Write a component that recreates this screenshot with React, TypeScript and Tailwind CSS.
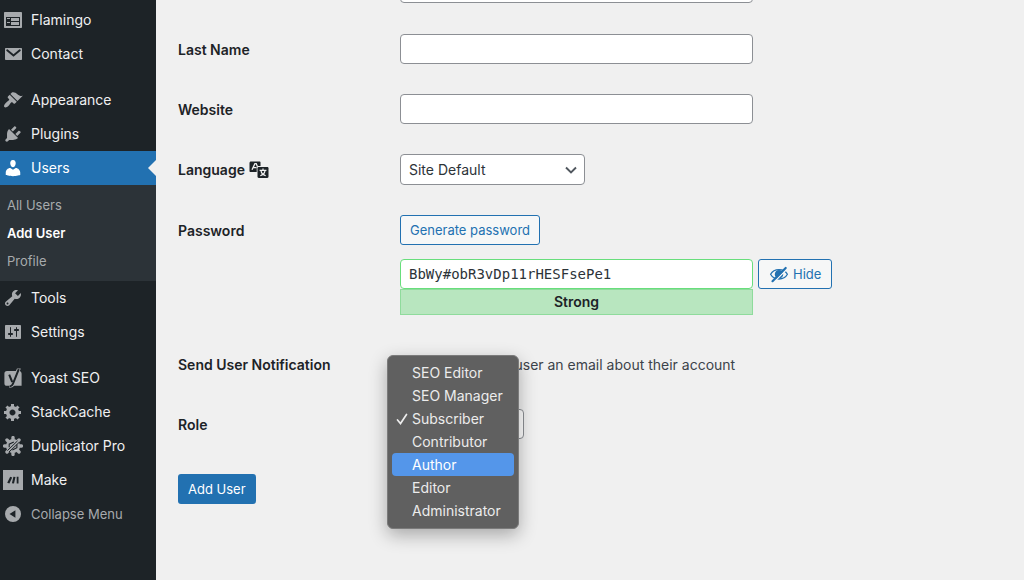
import { useState, type ReactNode } from 'react';
import { clsx } from 'clsx';

type IconProps = { children: ReactNode; className?: string };

const Icon = ({ children, className = 'size-5' }: IconProps) => (
  <svg viewBox="0 0 20 20" fill="currentColor" aria-hidden="true" className={clsx('shrink-0', className)}>
    {children}
  </svg>
);

const icons = {
  flamingo: (
    <Icon>
      <path d="M2 2h16c.55 0 1 .45 1 1v14c0 .55-.45 1-1 1H2c-.55 0-1-.45-1-1V3c0-.55.45-1 1-1zm15 14V7H3v9h14zM4 8v1h3V8H4zm4 0v3h8V8H8zm-4 4v1h3v-1H4zm4 0v3h8v-3H8z" />
    </Icon>
  ),
  contact: (
    <Icon>
      <path d="M3 4h15c.55 0 1 .45 1 1v10c0 .55-.45 1-1 1H3c-.55 0-1-.45-1-1V5c0-.55.45-1 1-1z" />
      <path d="M4.200 6.300l6.300 5.200 6.300-5.200" fill="none" stroke="#1d2327" strokeWidth="1.9" strokeLinecap="round" />
    </Icon>
  ),
  appearance: (
    <Icon>
      <path d="M14.48 11.06L7.41 3.99l1.5-1.5c.5-.56 2.3-.47 3.51.32 1.21.8 1.43 1.28 2.91 2.1 1.18.64 2.45 1.26 4.45.85zm-.71.71L6.7 4.7 4.93 6.47c-.39.39-.39 1.02 0 1.41l1.06 1.06c.39.39.39 1.03 0 1.42-.6.6-1.43 1.11-2.21 1.69-.35.26-.7.53-1.01.84C1.43 14.23.4 16.08 1.4 17.07c.99 1 2.84-.03 4.18-1.36.31-.31.58-.66.85-1.02.57-.78 1.08-1.61 1.69-2.21.39-.39 1.02-.39 1.41 0l1.06 1.06c.39.39 1.02.39 1.41 0z" />
    </Icon>
  ),
  plugins: (
    <Icon>
      <path d="M13.11 4.36L9.87 7.6 8 5.73l3.24-3.24c.35-.34 1.05-.2 1.56.32.52.51.66 1.21.31 1.55zm-8 1.77l.91-1.12 9.01 9.01-1.19.84c-.71.71-2.63 1.16-3.82 1.16H6.14L4.9 17.26c-.59.59-1.54.59-2.12 0-.59-.58-.59-1.53 0-2.12l1.24-1.24v-3.88c0-1.13.4-3.19 1.09-3.89zm7.26 3.97l3.24-3.24c.34-.35 1.04-.21 1.55.31.52.51.66 1.21.31 1.55l-3.24 3.25z" />
    </Icon>
  ),
  users: (
    <Icon>
      <path d="M10 9.250c-2.270 0-2.730-3.440-2.730-3.440C7 4.020 7.820 2 9.970 2c2.160 0 2.980 2.020 2.710 3.810 0 0-.41 3.440-2.680 3.440zM7.230 9.980L10 11.820 12.720 10c2.390 0 4.520 2.330 4.520 4.530v2.490s-3.650 1.130-7.240 1.130c-3.650 0-7.240-1.130-7.240-1.130v-2.490c0-2.250 1.940-4.550 4.470-4.550z" />
    </Icon>
  ),
  tools: (
    <Icon>
      <path d="M16.68 9.77c-1.34 1.34-3.3 1.67-4.95.99l-5.41 6.52c-.99.99-2.59.99-3.58 0s-.99-2.59 0-3.57l6.52-5.42c-.68-1.65-.35-3.61.99-4.95 1.28-1.28 3.12-1.62 4.72-1.06l-2.89 2.89 2.82 2.82 2.86-2.87c.53 1.58.18 3.39-1.08 4.65zM3.81 16.21c.4.39 1.04.39 1.43 0 .4-.4.4-1.04 0-1.43-.39-.4-1.03-.4-1.43 0-.39.39-.39 1.03 0 1.43z" />
    </Icon>
  ),
  settings: (
    <Icon>
      <path d="M18 16V4c0-.55-.45-1-1-1H3c-.55 0-1 .45-1 1v12c0 .55.45 1 1 1h14c.55 0 1-.45 1-1zM8 11h1c.55 0 1 .45 1 1s-.45 1-1 1H8v1.5c0 .28-.22.5-.5.5s-.5-.22-.5-.5V13H6c-.55 0-1-.45-1-1s.45-1 1-1h1V5.5c0-.28.22-.5.5-.5s.5.22.5.5V11zm5-2h-1c-.55 0-1-.45-1-1s.45-1 1-1h1V5.5c0-.28.22-.5.5-.5s.5.22.5.5V7h1c.55 0 1 .45 1 1s-.45 1-1 1h-1v5.5c0 .28-.22.5-.5.5s-.5-.22-.5-.5V9z" />
    </Icon>
  ),
  yoast: (
    <Icon>
      <path d="M4 3h12c1.600.2 2.600 1.200 2.600 2.800v12H4A2.600 2.600 0 0 1 1.400 15.200V5.600A2.600 2.600 0 0 1 4 3z" />
      <path d="M14 .4h3.800l-6.200 16.200c-.9 2.100-2.300 3.300-5.200 3.300v-2.400z" />
      <path
        d="M6.200 6.600l3 7.400M15.800 1.200l-5.900 14.600c-.7 1.700-1.500 2.400-3.200 2.600"
        fill="none"
        stroke="#1d2327"
        strokeWidth="2"
      />
    </Icon>
  ),
  stackcache: (
    <Icon>
      <path d="M18 12h-2.18c-.17.7-.44 1.35-.81 1.93l1.54 1.54-2.1 2.1-1.54-1.54c-.58.36-1.23.63-1.91.79V19H8v-2.18c-.68-.16-1.33-.43-1.91-.79l-1.54 1.54-2.12-2.12 1.54-1.54c-.36-.58-.63-1.23-.79-1.91H1V9.03h2.17c.16-.7.44-1.35.8-1.94L2.43 5.55l2.1-2.1 1.54 1.54c.58-.37 1.24-.64 1.93-.81V2h3v2.18c.68.16 1.33.43 1.91.79l1.54-1.54 2.12 2.12-1.54 1.54c.36.59.64 1.24.8 1.94H18V12zm-8.5 1.5c1.66 0 3-1.34 3-3s-1.34-3-3-3-3 1.34-3 3 1.34 3 3 3z" />
    </Icon>
  ),
  duplicator: (
    <Icon>
      <circle cx="10" cy="10" r="7" />
      <path
        d="M10 1.600v16.800M1.600 10h16.800M4 4l12 12M4 16L16 4"
        stroke="currentColor"
        strokeWidth="3.400"
        strokeLinecap="round"
      />
      <path d="M6.200 11.300V8.200L10.800 6M13.900 8.600v3.100L9.400 14" stroke="#1d2327" strokeWidth="1.100" fill="none" />
      <path d="M4.400 14.600L14.600 4.800M5.900 16.100L16.200 6.300" stroke="#1d2327" strokeWidth="1" fill="none" />
    </Icon>
  ),
  make: (
    <Icon>
      <path d="M0 0h20v20H0z" />
      <path d="M7.200 6.800l2 .6L6.400 13.600l-2.200-.8zM10.400 6.800l2.100.3-1.500 6.500-2.100-.4zM13.700 6.800h1.800v6.800h-1.800z" fill="#1d2327" />
    </Icon>
  ),
  collapse: (
    <Icon>
      <path fillRule="evenodd" d="M10 2a8 8 0 1 0 0 16 8 8 0 0 0 0-16zm2.400 4.300v7.400L6.500 10z" />
    </Icon>
  ),
  translation: (
    <Icon>
      <path d="M2 1.500h8.500c.6 0 1 .4 1 1V6H9.200c-.8 0-1.500.6-1.500 1.400V12H1.500c-.6 0-1-.4-1-1V3c0-.9.600-1.500 1.500-1.500z" />
      <path d="M3 9.800l2.900-6.200h1.300l1.200 3M4.300 7.600h3.200" stroke="#f0f0f0" strokeWidth="1.300" fill="none" />
      <path d="M9.700 7h8.600c.6 0 1.200.6 1.200 1.200v8.600c0 .6-.6 1.200-1.200 1.200H9.700c-.6 0-1.200-.6-1.200-1.200V8.200c0-.6.600-1.200 1.200-1.200z" />
      <path d="M10.600 10.300h6.800M14 8.400v2M12 11c.5 2.200 2.400 4 4.700 4.800M16 11c-.5 2.200-2.400 4-4.700 4.800" stroke="#f0f0f0" strokeWidth="1.200" fill="none" />
    </Icon>
  ),
  hidden: (
    <Icon>
      <path d="M1.600 10.300C3.300 7.200 6.400 5.600 10 5.600s6.700 1.600 8.400 4.700c-1.700 3.100-4.800 4.700-8.400 4.700s-6.700-1.600-8.400-4.700z" fill="none" stroke="currentColor" strokeWidth="1.300" />
      <path d="M10 6a4.200 4.200 0 1 0 0 8.500A4.200 4.200 0 0 0 10 6z" />
      <path d="M5.200 17.800L18.100 5" stroke="#f6f7f7" strokeWidth="1.400" />
      <path d="M3.500 17.200L16.700 4" stroke="currentColor" strokeWidth="2.200" strokeLinecap="round" />
    </Icon>
  ),
};

type MenuItem = { label: string; icon: ReactNode; spaced?: boolean; current?: boolean };

const menu: MenuItem[] = [
  { label: 'Flamingo', icon: icons.flamingo },
  { label: 'Contact', icon: icons.contact },
  { label: 'Appearance', icon: icons.appearance, spaced: true },
  { label: 'Plugins', icon: icons.plugins },
  { label: 'Users', icon: icons.users, current: true },
  { label: 'Tools', icon: icons.tools },
  { label: 'Settings', icon: icons.settings },
  { label: 'Yoast SEO', icon: icons.yoast, spaced: true },
  { label: 'StackCache', icon: icons.stackcache },
  { label: 'Duplicator Pro', icon: icons.duplicator },
  { label: 'Make', icon: icons.make },
];

const userPages = ['All Users', 'Add User', 'Profile'];

const roles = ['SEO Editor', 'SEO Manager', 'Subscriber', 'Contributor', 'Author', 'Editor', 'Administrator'];

const Sidebar = () => (
  <nav aria-label="Main menu" className="w-[156px] shrink-0 bg-[#1d2327] pt-[3px] text-[#f0f0f1]">
    <ul>
      {menu.map((item) => (
        <li key={item.label} className={clsx(item.spaced && 'mt-3')}>
          <a
            href="#"
            className={clsx(
              'relative flex h-[34px] items-center gap-2 pl-[3px]',
              item.current && 'bg-[#2271b1] text-white'
            )}
          >
            <span className={item.current ? 'text-white' : 'text-[#a7aaad]'}>{item.icon}</span>
            {item.label}
            {item.current && (
              <span className="absolute top-[9px] right-0 border-y-8 border-r-8 border-y-transparent border-r-[#f0f0f0]" />
            )}
          </a>
          {item.current && (
            <ul className="bg-[#2c3338] py-1.5 text-[13px] text-[#a7abad]">
              {userPages.map((page) => (
                <li key={page}>
                  <a
                    href="#"
                    className={clsx('flex h-7 items-center pl-[7px]', page === 'Add User' && 'font-semibold text-white')}
                  >
                    {page}
                  </a>
                </li>
              ))}
            </ul>
          )}
        </li>
      ))}
    </ul>
    <button type="button" className="flex h-[34px] w-full items-center gap-2 pl-[3px] text-[13px] text-[#a7aaad]">
      {icons.collapse}
      Collapse Menu
    </button>
  </nav>
);

type RowProps = { label: ReactNode; htmlFor: string; children: ReactNode; className?: string };

const Row = ({ label, htmlFor, children, className }: RowProps) => (
  <div className={clsx('flex items-start', className)}>
    <label htmlFor={htmlFor} className="flex h-[30px] w-[222px] shrink-0 items-center gap-1 pt-0.5 font-semibold">
      {label}
    </label>
    <div className="min-w-0 flex-1">{children}</div>
  </div>
);

const field = 'block h-[30px] w-full max-w-[353px] rounded border border-[#8c8f94] bg-white px-2';
const outlineButton =
  'flex h-[30px] items-center rounded-[3px] border border-[#2271b1] bg-[#f6f7f7] text-[13px] text-[#2271b1]';

const App = () => {
  const [role, setRole] = useState('Subscriber');
  const [active, setActive] = useState('Author');
  const [password, setPassword] = useState('BbWy#obR3vDp11rHESFsePe1');

  return (
    <div className="flex min-h-screen bg-[#f0f0f0] font-[Inter,sans-serif] text-sm text-[#1d2327]">
      <Sidebar />

      <main className="min-w-0 flex-1 px-[22px]">
        <form className="-mt-[27px] flex flex-col gap-[30px]" onSubmit={(e) => e.preventDefault()}>
          <div className="pl-[222px]">
            <input id="first-name" type="text" aria-label="First Name" className={field} />
          </div>
          <Row label="Last Name" htmlFor="last-name" className="mt-px">
            <input id="last-name" type="text" className={field} />
          </Row>
          <Row label="Website" htmlFor="website">
            <input id="website" type="url" className={field} />
          </Row>
          <Row label={<>Language {icons.translation}</>} htmlFor="language">
            <div className="relative w-[185px]">
              <select
                id="language"
                className="block h-[31px] w-full appearance-none rounded border border-[#8c8f94] bg-white px-2 text-[#2c3338]"
              >
                <option>Site Default</option>
              </select>
              <svg viewBox="0 0 16 16" className="pointer-events-none absolute top-2 right-1.5 size-4" aria-hidden="true">
                <path d="M3 5.500l5 5 5-5" fill="none" stroke="#50575e" strokeWidth="1.900" />
              </svg>
            </div>
          </Row>

          <Row label="Password" htmlFor="password">
            <button type="button" className={clsx(outlineButton, 'px-[9px]')}>
              Generate password
            </button>
            <div className="mt-3.5 flex items-start gap-[5px]">
              <div className="w-full max-w-[353px]">
                <input
                  id="password"
                  type="text"
                  value={password}
                  onChange={(e) => setPassword(e.target.value)}
                  className="block h-[30px] w-full rounded border border-[#68de7c] bg-white px-2 font-['DejaVu_Sans_Mono',monospace] text-[#2c3338]"
                />
                <div className="h-[26px] border border-[#8fdb9c] bg-[#b8e6bf] text-center leading-6 font-semibold">
                  Strong
                </div>
              </div>
              <button type="button" className={clsx(outlineButton, 'gap-1 px-2.5')}>
                {icons.hidden}
                Hide
              </button>
            </div>
          </Row>

          <Row label="Send User Notification" htmlFor="notify" className="mt-1">
            <div className="flex h-[30px] items-center gap-1 pt-0.5 text-[#3c434a]">
              <input id="notify" type="checkbox" defaultChecked className="size-4" />
              <label htmlFor="notify">Send the new user an email about their account</label>
            </div>
          </Row>

          <Row label="Role" htmlFor="role">
            <div className="relative w-[124px]">
              <select
                id="role"
                value={role}
                onChange={(e) => setRole(e.target.value)}
                className="block h-[30px] w-full appearance-none rounded border border-[#8c8f94] bg-white px-2"
              >
                {roles.map((name) => (
                  <option key={name}>{name}</option>
                ))}
              </select>
              <div
                role="listbox"
                aria-label="Role"
                className="absolute -top-[54px] -left-[13px] w-[132px] rounded-md border border-[#7b7b7b] bg-[#606060] px-1 pt-[5px] pb-1.5 text-[#ececec] shadow-[0_6px_18px_rgba(0,0,0,0.3)]"
              >
                {roles.map((name) => (
                  <button
                    key={name}
                    type="button"
                    role="option"
                    aria-selected={name === role}
                    onMouseEnter={() => setActive(name)}
                    onClick={() => setRole(name)}
                    className={clsx(
                      'flex h-[23px] w-full items-center rounded',
                      name === active && 'bg-[#5496ea] text-white'
                    )}
                  >
                    <span className="flex w-5 shrink-0 justify-center">
                      {name === role && (
                        <svg viewBox="0 0 12 12" className="size-3" aria-hidden="true">
                          <path d="M1.500 7l3 3.500L10.500 1.500" fill="none" stroke="currentColor" strokeWidth="1.700" strokeLinecap="round" />
                        </svg>
                      )}
                    </span>
                    {name}
                  </button>
                ))}
              </div>
            </div>
          </Row>

          <button
            type="submit"
            className="mt-[5px] h-[30px] self-start rounded-[3px] bg-[#2271b1] px-2.5 text-[13px] text-white"
          >
            Add User
          </button>
        </form>
      </main>
    </div>
  );
};

export default App;
